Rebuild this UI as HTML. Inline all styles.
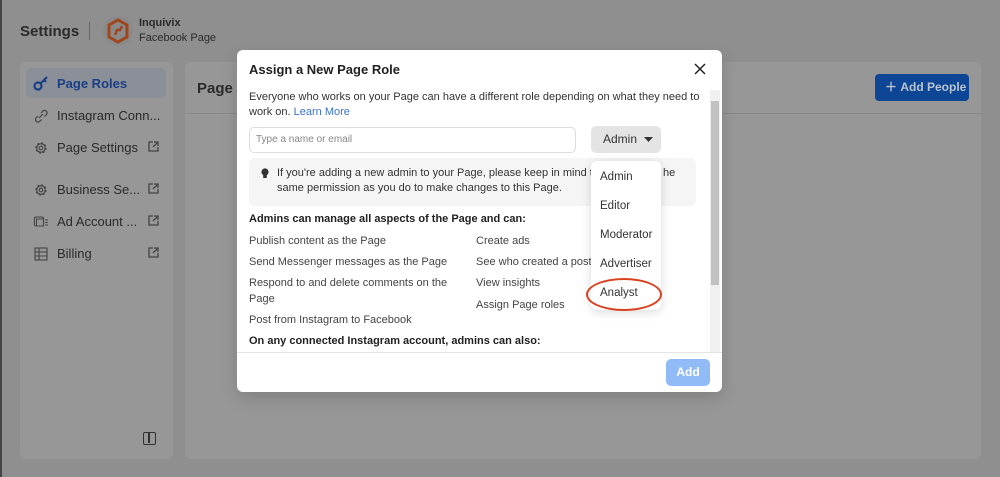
<!DOCTYPE html>
<html><head><meta charset="utf-8"><style>
*{box-sizing:border-box;margin:0;padding:0}
body{width:1000px;height:477px;overflow:hidden;background:#8f8f8f;font-family:"Liberation Sans",sans-serif;position:relative;color:#333}
.a{position:absolute}
.panel{position:absolute;background:#979797;border-radius:6px}
.nav{position:absolute;left:57px;font-size:13px;color:#2a2a2a;white-space:nowrap}
.ic{position:absolute;left:33px}
.ext{position:absolute;left:148px;width:11px;height:11px}
.t{position:absolute;font-size:11px;color:#444;white-space:nowrap}
.dd{position:absolute;left:600px;font-size:11.5px;color:#333}
</style></head><body>
<div class="a" style="left:0;top:0;width:2px;height:477px;background:#444"></div>
<div class="a" style="left:20px;top:23px;font-size:15px;font-weight:bold;color:#2a2a2a">Settings</div>
<div class="a" style="left:89px;top:22px;width:1px;height:18px;background:#666"></div>
<div class="a" style="left:103px;top:16px;width:30px;height:30px;border-radius:50%;background:#8a8a8a"></div>
<svg class="a" style="left:106px;top:18px" width="24" height="26" viewBox="0 0 24 26"><polygon points="12,2 21,7 21,19 12,24 3,19 3,7" fill="none" stroke="#a0461c" stroke-width="3"/><path d="M9,17 L11,12 L14,12 L16,8" stroke="#a0461c" stroke-width="2.5" fill="none"/></svg>
<div class="a" style="left:139px;top:17px;font-size:11px;font-weight:bold;color:#2a2a2a">Inquivix</div>
<div class="a" style="left:139px;top:32px;font-size:11px;color:#2a2a2a">Facebook Page</div>

<div class="panel" style="left:20px;top:62px;width:153px;height:397px;background:#979797"></div>
<div class="a" style="left:26px;top:68px;width:140px;height:30px;background:#8b8f97;border-radius:5px"></div>
<svg class="ic" style="top:75px" width="16" height="16" viewBox="0 0 16 16"><circle cx="5" cy="11" r="3.5" fill="none" stroke="#1a3f86" stroke-width="2.2"/><path d="M7.5 8.5 L14 2 M11 5 L13 7" stroke="#1a3f86" stroke-width="2.2"/></svg>
<div class="nav" style="top:76px;color:#1a3f86;font-weight:bold">Page Roles</div>
<svg class="ic" style="top:108px" width="16" height="16" viewBox="0 0 16 16"><path d="M6 10 L10 6 M5 8 L3 10 A2.5 2.5 0 0 0 6.5 13.5 L8.5 11.5 M8 5 L10 3 A2.5 2.5 0 0 1 13.5 6.5 L11.5 8.5" fill="none" stroke="#444" stroke-width="1.2"/></svg>
<div class="nav" style="top:108px">Instagram Conn...</div>
<svg class="ic" style="top:140px" width="16" height="16" viewBox="0 0 16 16"><circle cx="8" cy="8" r="5" fill="none" stroke="#444" stroke-width="1.2" stroke-dasharray="2.2 1.7"/><circle cx="8" cy="8" r="4.2" fill="none" stroke="#444" stroke-width="1.1"/><circle cx="8" cy="8" r="1.8" fill="none" stroke="#444" stroke-width="1.1"/></svg>
<div class="nav" style="top:140px">Page Settings</div>
<svg class="ic" style="top:182px" width="16" height="16" viewBox="0 0 16 16"><circle cx="8" cy="8" r="5" fill="none" stroke="#444" stroke-width="1.2" stroke-dasharray="2.2 1.7"/><circle cx="8" cy="8" r="4.2" fill="none" stroke="#444" stroke-width="1.1"/><circle cx="8" cy="8" r="1.8" fill="none" stroke="#444" stroke-width="1.1"/></svg>
<div class="nav" style="top:182px">Business Se...</div>
<svg class="ic" style="top:214px" width="16" height="16" viewBox="0 0 16 16"><rect x="1.5" y="3" width="9" height="9" rx="1.5" fill="none" stroke="#444" stroke-width="1.1"/><rect x="3.5" y="5" width="7" height="7" fill="none" stroke="#444" stroke-width="1"/><path d="M12 6h3M12 8.5h3M12 11h3" stroke="#444"/></svg>
<div class="nav" style="top:214px">Ad Account ...</div>
<svg class="ic" style="top:246px" width="16" height="16" viewBox="0 0 16 16"><rect x="2" y="2" width="12" height="12" fill="none" stroke="#444" stroke-width="1.1"/><path d="M2 6h12M2 10h12M6 2v12" stroke="#444" stroke-width="1.1"/></svg>
<div class="nav" style="top:246px">Billing</div>
<svg class="ext" style="top:141px" viewBox="0 0 11 11"><path d="M5 1H1V10H10V6M6 1H10V5M10 1L5 6" fill="none" stroke="#444" stroke-width="1.3"/></svg>
<svg class="ext" style="top:183px" viewBox="0 0 11 11"><path d="M5 1H1V10H10V6M6 1H10V5M10 1L5 6" fill="none" stroke="#444" stroke-width="1.3"/></svg>
<svg class="ext" style="top:215px" viewBox="0 0 11 11"><path d="M5 1H1V10H10V6M6 1H10V5M10 1L5 6" fill="none" stroke="#444" stroke-width="1.3"/></svg>
<svg class="ext" style="top:247px" viewBox="0 0 11 11"><path d="M5 1H1V10H10V6M6 1H10V5M10 1L5 6" fill="none" stroke="#444" stroke-width="1.3"/></svg>
<div class="a" style="left:143px;top:432px;width:13px;height:13px;border:1.5px solid #333;border-radius:2px"><div style="position:absolute;left:4px;top:0;width:1.5px;height:10px;background:#333"></div></div>

<div class="panel" style="left:185px;top:62px;width:796px;height:397px;background:#979797"></div>
<div class="a" style="left:185px;top:113px;width:796px;height:1px;background:#888"></div>
<div class="a" style="left:197px;top:80px;font-size:15px;font-weight:bold;color:#2a2a2a">Page R</div>
<div class="a" style="left:875px;top:74px;width:94px;height:27px;background:#0d4694;border-radius:4px;color:#b9c3d2;font-size:12px;font-weight:bold;line-height:27px;padding-left:10px;white-space:nowrap">＋&nbsp;Add People</div>

<div class="a" style="left:237px;top:50px;width:485px;height:342px;background:#fff;border-radius:6px;box-shadow:0 6px 16px rgba(0,0,0,.15)"></div>
<div class="a" style="left:249px;top:62px;font-size:13px;font-weight:bold;color:#222">Assign a New Page Role</div>
<svg class="a" style="left:694px;top:63px" width="12" height="12" viewBox="0 0 12 12"><path d="M1 1L11 11M11 1L1 11" stroke="#222" stroke-width="1.5"/></svg>
<div class="a" style="left:710px;top:90px;width:10px;height:262px;background:#f0f0f0"></div>
<div class="a" style="left:711px;top:101px;width:8px;height:184px;background:#c1c1c1"></div>
<div class="t" style="left:249px;top:91px;color:#333">Everyone who works on your Page can have a different role depending on what they need to</div>
<div class="t" style="left:249px;top:106px;color:#333">work on. <span style="color:#3b73c7">Learn More</span></div>
<div class="a" style="left:249px;top:127px;width:327px;height:26px;border:1px solid #ddd;border-radius:5px;font-size:10px;color:#888;padding:6px 6px">Type a name or email</div>
<div class="a" style="left:591px;top:126px;width:70px;height:27px;background:#e4e4e4;border-radius:5px;font-size:12px;color:#333;line-height:27px;padding-left:12px">Admin <svg width="9" height="6" style="margin-left:4px" viewBox="0 0 9 6"><path d="M0 0H9L4.5 5Z" fill="#333"/></svg></div>
<div class="a" style="left:249px;top:158px;width:447px;height:48px;background:#f5f5f5;border-radius:6px"></div>
<svg class="a" style="left:261px;top:168px" width="8" height="11" viewBox="0 0 8 11"><circle cx="4" cy="4" r="3.6" fill="#333"/><rect x="2.2" y="6" width="3.6" height="4" fill="#333"/></svg>
<div class="t" style="left:277px;top:167px;color:#333">If you're adding a new admin to your Page, please keep in mind that</div>
<div class="t" style="left:663px;top:167px;color:#333">he</div>
<div class="t" style="left:277px;top:182px;color:#333">same permission as you do to make changes to this Page.</div>
<div class="t" style="left:249px;top:213px;font-weight:bold;color:#222">Admins can manage all aspects of the Page and can:</div>
<div class="t" style="left:249px;top:235px">Publish content as the Page</div>
<div class="t" style="left:249px;top:256px">Send Messenger messages as the Page</div>
<div class="t" style="left:249px;top:277px">Respond to and delete comments on the</div>
<div class="t" style="left:249px;top:293px">Page</div>
<div class="t" style="left:249px;top:314px">Post from Instagram to Facebook</div>
<div class="t" style="left:476px;top:235px">Create ads</div>
<div class="t" style="left:476px;top:256px">See who created a post</div>
<div class="t" style="left:476px;top:277px">View insights</div>
<div class="t" style="left:476px;top:299px">Assign Page roles</div>
<div class="t" style="left:249px;top:335px;font-weight:bold;color:#222">On any connected Instagram account, admins can also:</div>
<div class="a" style="left:237px;top:352px;width:485px;height:1px;background:#e5e5e5"></div>
<div class="a" style="left:666px;top:359px;width:44px;height:27px;background:#90bbf7;border-radius:5px;color:#fff;font-size:12px;font-weight:bold;text-align:center;line-height:27px">Add</div>

<div class="a" style="left:591px;top:161px;width:70px;height:149px;background:#fff;border-radius:6px;box-shadow:0 2px 10px rgba(0,0,0,.15)"></div>
<div class="dd" style="top:171px">Admin</div>
<div class="dd" style="top:200px">Editor</div>
<div class="dd" style="top:229px">Moderator</div>
<div class="dd" style="top:258px">Advertiser</div>
<div class="dd" style="top:287px">Analyst</div>
<div class="a" style="left:586px;top:278px;width:76px;height:33px;border:2.5px solid #d9411f;border-radius:50%"></div>
</body></html>
